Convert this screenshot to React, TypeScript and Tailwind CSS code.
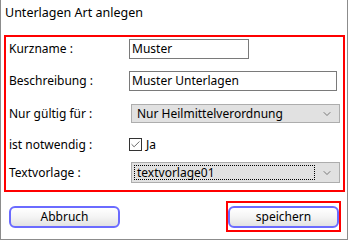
import { ChevronDown, Check } from "lucide-react";

const font = { fontFamily: '"Noto Sans", "Segoe UI", sans-serif' };

function Row({
  label,
  className,
  children,
}: {
  label: string;
  className?: string;
  children: React.ReactNode;
}) {
  return (
    <div className={`flex items-center ${className ?? ""}`}>
      <span className="w-[123px] shrink-0 pl-[3px]">{label}</span>
      {children}
    </div>
  );
}

function Select({ value, focused = false }: { value: string; focused?: boolean }) {
  return (
    <div className="ml-[2px] flex h-full w-[209px] items-center border border-[#adadad] bg-[#e1e1e1] pr-[6px]">
      <div
        className={`ml-[2px] flex h-[calc(100%-4px)] flex-1 items-center pl-[2px] ${
          focused ? "border border-dotted border-black" : "border border-transparent"
        }`}
      >
        {value}
      </div>
      <ChevronDown className="ml-[6px] size-[12px] text-[#555]" strokeWidth={1.5} />
    </div>
  );
}

function WinButton({ label }: { label: string }) {
  return (
    <button
      type="button"
      className="flex h-[22px] w-[111px] items-center justify-center rounded-[6px] border-2 border-[#6b6bff] bg-gradient-to-b from-white via-[#f4f4f4] to-[#e2e2e2] text-[12px] text-black"
    >
      {label}
    </button>
  );
}

export default function App() {
  return (
    <div className="h-[241px] w-[349px] bg-white text-[12px] text-black" style={font}>
      <div className="flex h-[240px] w-[348px] flex-col border-x border-b border-[#8c8c8c] bg-white">
        <div className="flex h-[35px] items-start pl-[4px] pt-[4px] text-[12.5px]">
          Unterlagen Art anlegen
        </div>

        <div className="ml-[3px] flex h-[157px] w-[341px] flex-col border-2 border-[#ff0000] pt-[2px]">
          <Row label="Kurzname :" className="h-[20px]">
            <div className="flex h-full w-[120px] items-center border border-[#7a7a7a] pl-[2px]">
              Muster
            </div>
          </Row>
          <Row label="Beschreibung :" className="mt-[12px] h-[20px]">
            <div className="flex h-full w-[208px] items-center border border-[#7a7a7a] pl-[2px]">
              Muster Unterlagen
            </div>
          </Row>
          <Row label="Nur gültig für :" className="mt-[13px] h-[19px]">
            <Select value="Nur Heilmittelverordnung" />
          </Row>
          <Row label="ist notwendig :" className="mt-[12px] h-[19px]">
            <div className="flex items-center">
              <div className="flex size-[13px] items-center justify-center border border-[#333] bg-white">
                <Check className="size-[11px] text-[#333]" strokeWidth={1.6} />
              </div>
              <span className="ml-[4px]">Ja</span>
            </div>
          </Row>
          <Row label="Textvorlage :" className="mt-[8px] h-[21px]">
            <Select value="textvorlage01" focused />
          </Row>
        </div>

        <div className="mt-[9px] flex items-center pl-[8px]">
          <WinButton label="Abbruch" />
          <div className="ml-auto mr-[6px] flex h-[31px] w-[115px] items-center justify-center border-2 border-[#ff0000]">
            <WinButton label="speichern" />
          </div>
        </div>
      </div>
    </div>
  );
}
